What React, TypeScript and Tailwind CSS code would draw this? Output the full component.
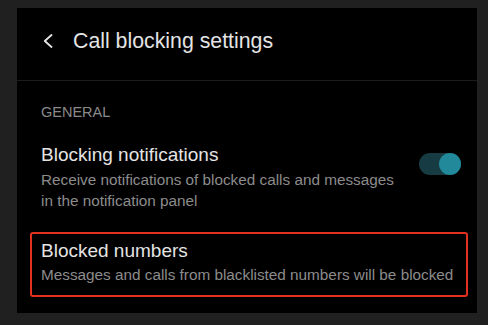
import React from 'react';

function ChevronLeft() {
    return (
        <svg width="10" height="14" viewBox="0 0 10 14" fill="none" className="shrink-0">
            <polyline points="8.5,1 1.8,7 8.5,13" stroke="#e4e4e4" strokeWidth="1.8" strokeLinecap="round" strokeLinejoin="round" />
        </svg>
    );
}

function Toggle({ on }: { on: boolean }) {
    return (
        <div className={`relative w-[42px] h-[22px] rounded-full ${on ? 'bg-[#173b42]' : 'bg-[#333]'}`}>
            <span className={`absolute top-0 w-[22px] h-[22px] rounded-full ${on ? 'right-0 bg-[#22899a]' : 'left-0 bg-[#999]'}`} />
        </div>
    );
}

export default function App() {
    return (
        <div
            className="w-[488px] h-[325px] bg-[#202020] pt-[8px] pl-[17px] pr-[11px] overflow-hidden"
            style={{ fontFamily: '"Liberation Sans", Arial, sans-serif' }}
        >
            <div className="h-[305px] bg-black">
                {/* header */}
                <div className="h-[72px] pt-[19px] pl-[26px] flex items-start">
                    <div className="h-[28px] flex items-center gap-[20px]">
                        <ChevronLeft />
                        <h1 className="text-[21.3px] leading-[28px] text-[#e4e4e4]">Call blocking settings</h1>
                    </div>
                </div>
                <div className="h-px bg-[#1b1b1b]" />

                <p className="mt-[21px] pl-[24px] text-[14.5px] leading-[20px] text-[#8a8a8a]">GENERAL</p>

                {/* blocking notifications */}
                <div className="mt-[21px] pl-[24px] pr-[16px] flex justify-between items-start">
                    <div className="w-[362px]">
                        <div className="text-[19px] leading-[24px] text-[#e4e4e4]">Blocking notifications</div>
                        <div className="mt-[2px] text-[15.3px] leading-[21px] text-[#8c8c8c]">
                            Receive notifications of blocked calls and messages in the notification panel
                        </div>
                    </div>
                    <div className="mt-[10px]">
                        <Toggle on />
                    </div>
                </div>

                {/* blocked numbers (highlighted) */}
                <div className="mt-[21px] ml-[13px] mr-[9px] border-2 border-[#e2321f] rounded-[3px] pt-[5px] pb-[10px] pl-[9px]">
                    <div className="text-[19px] leading-[24px] text-[#e4e4e4]">Blocked numbers</div>
                    <div className="mt-[1px] text-[15.3px] leading-[21px] text-[#8c8c8c]">
                        Messages and calls from blacklisted numbers will be blocked
                    </div>
                </div>
            </div>
        </div>
    );
}
